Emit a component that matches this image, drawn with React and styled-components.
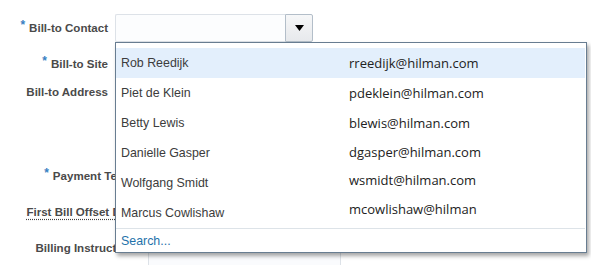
import React from "react";
import styled, { createGlobalStyle } from "styled-components";

const Global = createGlobalStyle`
  html, body { margin: 0; padding: 0; background: #ffffff; }
  body { font-family: "Liberation Sans", Arial, sans-serif; }
`;

const Page = styled.div`
  width: 591px;
  height: 265px;
  overflow: hidden;
  padding-top: 14px;
  box-sizing: border-box;
  display: flex;
  flex-direction: column;
  gap: 8px;
`;

const Row = styled.div`
  display: grid;
  grid-template-columns: ${(p) => p.$labelWidth}px 1fr;
  column-gap: ${(p) => p.$gap}px;
  align-items: start;
  height: ${(p) => p.$height || 28}px;
  margin-top: ${(p) => (p.$flush ? -8 : 0)}px;
`;

const Label = styled.div`
  text-align: right;
  line-height: 28px;
  font-size: 11.55px;
  font-weight: bold;
  color: #4a4a4a;
  white-space: nowrap;
  padding-right: ${(p) => p.$inset || 0}px;
`;

const Req = styled.span`
  color: #3a7fc2;
  font-size: 12px;
  position: relative;
  top: -3px;
  margin-right: 4px;
`;

const HelpText = styled.span`
  text-decoration: underline dotted #444;
  text-underline-offset: 3px;
`;

const Field = styled.div`
  position: relative;
  display: flex;
  width: 198px;
  height: 28px;
`;

const Input = styled.div`
  flex: 1;
  box-sizing: border-box;
  border: 1px solid #dde2e8;
  border-right: none;
  background: #fcfdfe;
  border-radius: 2px 0 0 2px;
`;

const DropButton = styled.div`
  width: 28px;
  box-sizing: border-box;
  border: 1px solid #b3bec9;
  border-radius: 0 2px 2px 0;
  background: linear-gradient(#f6f7f8, #e7e9ec);
  display: flex;
  align-items: center;
  justify-content: center;
`;

const Panel = styled.div`
  position: absolute;
  top: 28px;
  left: 0;
  width: 472px;
  box-sizing: border-box;
  border: 1px solid #687d91;
  background: #ffffff;
  box-shadow: 2px 3px 4px rgba(0, 0, 0, 0.35);
  padding-top: 5px;
  z-index: 10;
`;

const Option = styled.div`
  display: grid;
  grid-template-columns: 233px 1fr;
  height: 30px;
  align-items: center;
  margin-right: 1px;
  background: ${(p) => (p.$active ? "#e3effc" : "transparent")};
`;

const Name = styled.span`
  padding-left: 5px;
  font-size: 12.4px;
  color: #3c3c3c;
`;

const Email = styled.span`
  font-family: "Open Sans", "Noto Sans", sans-serif;
  font-size: 13px;
  color: #222;
  position: relative;
  top: ${(p) => p.$nudge || 0}px;
`;

const Footer = styled.div`
  border-top: 1px solid #dde3e8;
  margin-right: 1px;
  height: 23px;
  display: flex;
  align-items: center;
  padding-left: 5px;
  font-size: 12.4px;
  color: #1f72aa;
`;

const TextArea = styled.div`
  width: 193px;
  height: 60px;
  margin-top: 2px;
  box-sizing: border-box;
  border: 1px solid #dde2e8;
  background: #fafbfd;
`;

const contacts = [
  ["Rob Reedijk", "rreedijk@hilman.com", 0],
  ["Piet de Klein", "pdeklein@hilman.com", 0],
  ["Betty Lewis", "blewis@hilman.com", 0],
  ["Danielle Gasper", "dgasper@hilman.com", -1],
  ["Wolfgang Smidt", "wsmidt@hilman.com", -3],
  ["Marcus Cowlishaw", "mcowlishaw@hilman", -4],
];

export default function App() {
  return (
    <>
      <Global />
      <Page>
        <Row $labelWidth={108} $gap={7}>
          <Label>
            <Req>*</Req>Bill-to Contact
          </Label>
          <Field>
            <Input />
            <DropButton>
              <svg width="9" height="6" viewBox="0 0 9 6">
                <path d="M0 0 H9 L4.5 6 Z" fill="#000" />
              </svg>
            </DropButton>
            <Panel>
              {contacts.map(([n, e, nudge], i) => (
                <Option key={n} $active={i === 0}>
                  <Name>{n}</Name>
                  <Email $nudge={nudge}>{e}</Email>
                </Option>
              ))}
              <Footer>Search...</Footer>
            </Panel>
          </Field>
        </Row>
        <Row $labelWidth={108} $gap={7}>
          <Label>
            <Req>*</Req>Bill-to Site
          </Label>
        </Row>
        <Row $labelWidth={108} $gap={7} $height={76} $flush>
          <Label>Bill-to Address</Label>
        </Row>
        <Row $labelWidth={140} $gap={8}>
          <Label $inset={2}>
            <Req>*</Req>Payment Terms
          </Label>
        </Row>
        <Row $labelWidth={140} $gap={8}>
          <Label>
            <HelpText>First Bill Offset Days</HelpText>
          </Label>
        </Row>
        <Row $labelWidth={140} $gap={8}>
          <Label>Billing Instructions</Label>
          <TextArea />
        </Row>
      </Page>
    </>
  );
}
